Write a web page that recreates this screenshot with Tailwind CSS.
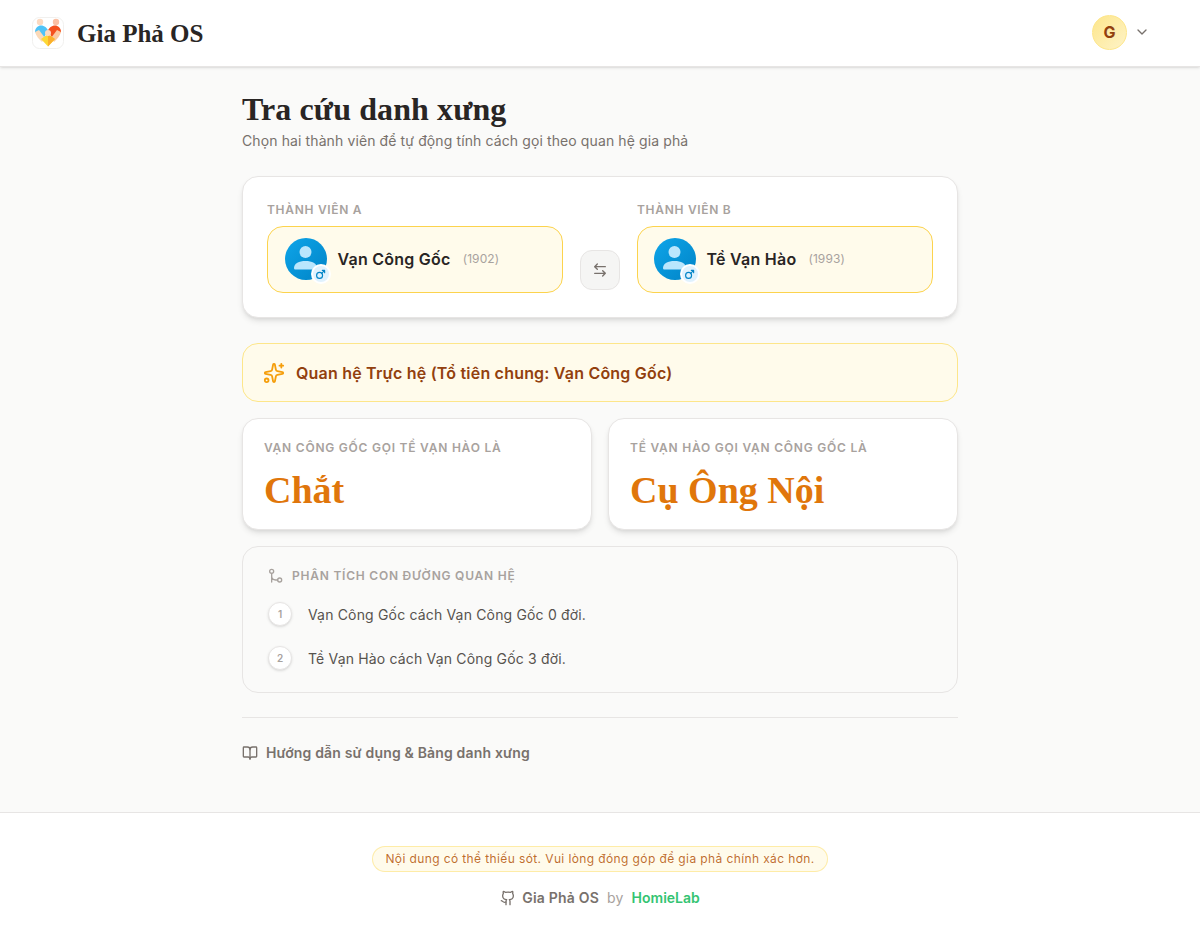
<!DOCTYPE html>
<html lang="en">
<head>
  <meta charset="UTF-8" />
  <title>Tra cứu danh xưng – Gia Phả OS</title>
  <script src="https://cdn.jsdelivr.net/npm/@tailwindcss/browser@4"></script>
</head>
<body class="bg-[#fafaf9] min-h-screen flex flex-col font-[Inter,sans-serif] text-[#292524]">

  <!-- Header -->
  <header class="h-[67px] bg-white border-b border-[#e7e5e4] shadow-sm flex items-center justify-between pl-8 pr-[50px]">
    <div class="flex items-center gap-[13px]">
      <svg class="w-8 h-8" viewBox="0 0 32 32">
        <rect x="0.5" y="0.5" width="31" height="31" rx="7" fill="#fff" stroke="#f1f0ee"/>
        <circle cx="8" cy="5" r="3.2" fill="#fcd9c0"/>
        <circle cx="24" cy="5" r="3.2" fill="#fbc0a4"/>
        <path d="M3 15c0-4 3-6.500 6-6.500 3.500 0 6 2.500 7 5l-4 7z" fill="#4fc3f7"/>
        <path d="M29 15c0-4-3-6.500-6-6.500-3.500 0-6 2.500-7 5l4 7z" fill="#f4511e"/>
        <path d="M3 15c1 4 4 7 7 10l3-4-6-8z" fill="#fbd9b8"/>
        <path d="M29 15c-1 4-4 7-7 10l-3-4 6-8z" fill="#fbc9a0"/>
        <path d="M9 22l7-5 7 5-7 7.500z" fill="#fdd835"/>
        <path d="M16 17l7 5-7 7.500z" fill="#fbb02d"/>
        <circle cx="16" cy="16" r="3" fill="#fcd9c0"/>
      </svg>
      <span class="font-['Liberation_Serif',serif] font-bold text-[25px] pt-[2px] text-[#292524]">Gia Phả OS</span>
    </div>
    <div class="flex items-center gap-[7px] mb-[2px]">
      <div class="w-[35px] h-[35px] rounded-full bg-gradient-to-br from-[#fde68a] to-[#fef3c7] border border-[#fde68a] flex items-center justify-center text-[#92400e] font-bold text-base">G</div>
      <svg class="w-4 h-4 text-[#78716c]" viewBox="0 0 24 24" fill="none" stroke="currentColor" stroke-width="2" stroke-linecap="round" stroke-linejoin="round"><path d="m6 9 6 6 6-6"/></svg>
    </div>
  </header>

  <!-- Main -->
  <main class="flex-1 w-[716px] mx-auto pt-[23px]">
    <h1 class="font-['Liberation_Serif',serif] font-bold text-[32px] leading-[38px] tracking-[0.1px] text-[#292524]">Tra cứu danh xưng</h1>
    <p class="text-sm leading-5 tracking-[0.11px] text-[#78716c] mt-[3px]">Chọn hai thành viên để tự động tính cách gọi theo quan hệ gia phả</p>

    <!-- Member picker -->
    <section class="mt-[25px] bg-white border border-[#e7e5e4] rounded-2xl shadow-md h-[142px] px-6 flex items-end gap-[17px] pb-[24px]">
      <div class="flex-1">
        <div class="text-xs leading-4 font-semibold tracking-[0.7px] text-[#a8a29e] mb-[8px]">THÀNH VIÊN A</div>
        <div class="h-[67px] rounded-2xl bg-[#fffbeb] border-[1.5px] border-[#fcd34d] flex items-center pl-[16.500px] gap-[11px]">
          <div class="relative w-[42px] h-[42px] mb-[1px] rounded-full bg-gradient-to-br from-[#0ea5e9] to-[#0284c7]">
            <svg class="w-[42px] h-[42px]" viewBox="0 0 42 42"><circle cx="20.500" cy="14" r="6" fill="#bae6fd"/><path d="M9 30c0-4.500 5-7 11.500-7S32 25.500 32 30c0 1-.7 1.500-1.500 1.500h-20C9.700 31.500 9 31 9 30z" fill="#bae6fd"/></svg>
            <div class="absolute right-[-4px] bottom-[-4px] w-5 h-5 rounded-full bg-[#e0f2fe] border-2 border-white flex items-center justify-center">
              <svg class="w-[11px] h-[11px] text-[#0284c7]" viewBox="0 0 24 24" fill="none" stroke="currentColor" stroke-width="2.500" stroke-linecap="round" stroke-linejoin="round"><circle cx="10" cy="14" r="6.500"/><path d="M14.500 9.500 21 3M16 3h5v5"/></svg>
            </div>
          </div>
          <span class="font-semibold text-base mb-[2px] tracking-[0.25px] text-[#292524]">Vạn Công Gốc</span>
          <span class="text-xs tracking-[0.1px] text-[#a8a29e] ml-[1px] mb-[1px]">(1902)</span>
        </div>
      </div>

      <button class="w-10 h-10 mb-[3px] rounded-xl bg-[#f5f5f4] border border-[#e7e5e4] flex items-center justify-center text-[#78716c] shrink-0">
        <svg class="w-4 h-4" viewBox="0 0 24 24" fill="none" stroke="currentColor" stroke-width="2" stroke-linecap="round" stroke-linejoin="round"><path d="M8 3 4 7l4 4M4 7h16M16 21l4-4-4-4M20 17H4"/></svg>
      </button>

      <div class="flex-1">
        <div class="text-xs leading-4 font-semibold tracking-[0.7px] text-[#a8a29e] mb-[8px]">THÀNH VIÊN B</div>
        <div class="h-[67px] rounded-2xl bg-[#fffbeb] border-[1.5px] border-[#fcd34d] flex items-center pl-[15.500px] gap-[11px]">
          <div class="relative w-[42px] h-[42px] mb-[1px] rounded-full bg-gradient-to-br from-[#0ea5e9] to-[#0284c7]">
            <svg class="w-[42px] h-[42px]" viewBox="0 0 42 42"><circle cx="20.500" cy="14" r="6" fill="#bae6fd"/><path d="M9 30c0-4.500 5-7 11.500-7S32 25.500 32 30c0 1-.7 1.500-1.500 1.500h-20C9.700 31.500 9 31 9 30z" fill="#bae6fd"/></svg>
            <div class="absolute right-[-4px] bottom-[-4px] w-5 h-5 rounded-full bg-[#e0f2fe] border-2 border-white flex items-center justify-center">
              <svg class="w-[11px] h-[11px] text-[#0284c7]" viewBox="0 0 24 24" fill="none" stroke="currentColor" stroke-width="2.500" stroke-linecap="round" stroke-linejoin="round"><circle cx="10" cy="14" r="6.500"/><path d="M14.500 9.500 21 3M16 3h5v5"/></svg>
            </div>
          </div>
          <span class="font-semibold text-base mb-[2px] tracking-[0.25px] text-[#292524]">Tề Vạn Hào</span>
          <span class="text-xs tracking-[0.1px] text-[#a8a29e] ml-[1px] mb-[1px]">(1993)</span>
        </div>
      </div>
    </section>

    <!-- Relation banner -->
    <div class="mt-[25px] h-[59px] rounded-2xl bg-[#fffbeb] border border-[#fde68a] flex items-center px-5 gap-[11px]">
      <svg class="w-[22px] h-[22px] text-[#f59e0b]" viewBox="0 0 24 24" fill="none" stroke="currentColor" stroke-width="2" stroke-linecap="round" stroke-linejoin="round"><path d="M11.017 2.814a1 1 0 0 1 1.966 0l1.051 5.558a2 2 0 0 0 1.594 1.594l5.558 1.051a1 1 0 0 1 0 1.966l-5.558 1.051a2 2 0 0 0-1.594 1.594l-1.051 5.558a1 1 0 0 1-1.966 0l-1.051-5.558a2 2 0 0 0-1.594-1.594l-5.558-1.051a1 1 0 0 1 0-1.966l5.558-1.051a2 2 0 0 0 1.594-1.594z"/><path d="M20 2v4M22 4h-4"/><circle cx="4" cy="20" r="2"/></svg>
      <span class="font-semibold text-base tracking-[0.2px] text-[#92400e]">Quan hệ Trực hệ (Tổ tiên chung: Vạn Công Gốc)</span>
    </div>

    <!-- Results -->
    <div class="grid grid-cols-2 gap-4 mt-4">
      <div class="h-[112px] bg-white border border-[#e7e5e4] rounded-2xl shadow-md px-[21px] pt-[21px]">
        <div class="text-xs leading-4 font-semibold tracking-[0.77px] text-[#a8a29e]">VẠN CÔNG GỐC GỌI TỀ VẠN HÀO LÀ</div>
        <div class="font-['Liberation_Serif',serif] font-bold text-[38px] leading-[48px] mt-[10px] text-[#e0760b]">Chắt</div>
      </div>
      <div class="h-[112px] bg-white border border-[#e7e5e4] rounded-2xl shadow-md px-[21px] pt-[21px]">
        <div class="text-xs leading-4 font-semibold tracking-[0.77px] text-[#a8a29e]">TỀ VẠN HÀO GỌI VẠN CÔNG GỐC LÀ</div>
        <div class="font-['Liberation_Serif',serif] font-bold text-[38px] leading-[48px] mt-[10px] text-[#e0760b]">Cụ Ông Nội</div>
      </div>
    </div>

    <!-- Path analysis -->
    <section class="mt-4 h-[147px] rounded-2xl border border-[#e7e5e4] bg-[#fafaf9] px-[25px] pt-[21px]">
      <div class="flex items-center gap-2">
        <svg class="w-4 h-4 text-[#a8a29e]" viewBox="0 0 24 24" fill="none" stroke="currentColor" stroke-width="2" stroke-linecap="round" stroke-linejoin="round"><circle cx="5.500" cy="5" r="3"/><circle cx="17.500" cy="18" r="3"/><path d="M5.500 8v13M5.500 12c0 4 3 6 6 6h3"/></svg>
        <span class="text-xs leading-4 font-semibold tracking-[0.77px] text-[#a8a29e]">PHÂN TÍCH CON ĐƯỜNG QUAN HỆ</span>
      </div>
      <ol class="mt-[18px] flex flex-col gap-5">
        <li class="flex items-center gap-4 h-6">
          <span class="w-6 h-6 rounded-full bg-white border border-[#e7e5e4] shadow-sm flex items-center justify-center text-[10px] font-semibold text-[#a8a29e]">1</span>
          <span class="text-sm pt-[2px] tracking-[0.17px] text-[#57534e]">Vạn Công Gốc cách Vạn Công Gốc 0 đời.</span>
        </li>
        <li class="flex items-center gap-4 h-6">
          <span class="w-6 h-6 rounded-full bg-white border border-[#e7e5e4] shadow-sm flex items-center justify-center text-[10px] font-semibold text-[#a8a29e]">2</span>
          <span class="text-sm pt-[2px] tracking-[0.17px] text-[#57534e]">Tề Vạn Hào cách Vạn Công Gốc 3 đời.</span>
        </li>
      </ol>
    </section>

    <!-- Guide -->
    <div class="mt-6 border-t border-[#e7e5e4] pt-[25px] flex items-center gap-2 text-[#78716c]">
      <svg class="w-4 h-4" viewBox="0 0 24 24" fill="none" stroke="currentColor" stroke-width="2" stroke-linecap="round" stroke-linejoin="round"><path d="M12 7v14"/><path d="M3 18a1 1 0 0 1-1-1V4a1 1 0 0 1 1-1h5a4 4 0 0 1 4 4 4 4 0 0 1 4-4h5a1 1 0 0 1 1 1v13a1 1 0 0 1-1 1h-6a3 3 0 0 0-3 3 3 3 0 0 0-3-3z"/></svg>
      <span class="text-sm font-semibold tracking-[0.17px]">Hướng dẫn sử dụng &amp; Bảng danh xưng</span>
    </div>
  </main>

  <!-- Footer -->
  <footer class="h-[129px] bg-white border-t border-[#e7e5e4] flex flex-col items-center pt-[33px]">
    <div class="h-[26px] px-3 rounded-full bg-[#fffbeb] border border-[#fde68a]/70 flex items-center text-xs tracking-[0.39px] text-[#b45309]/85">Nội dung có thể thiếu sót. Vui lòng đóng góp để gia phả chính xác hơn.</div>
    <div class="flex items-center gap-2 mt-[16px] text-sm">
      <svg class="w-4 h-4 mr-[-2px] text-[#78716c]" viewBox="0 0 24 24" fill="none" stroke="currentColor" stroke-width="2" stroke-linecap="round" stroke-linejoin="round"><path d="M15 22v-4a4.800 4.800 0 0 0-1-3.500c3 0 6-2 6-5.500.08-1.250-.27-2.480-1-3.500.28-1.150.28-2.350 0-3.500 0 0-1 0-3 1.500-2.640-.5-5.360-.5-8 0C6 2 5 2 5 2c-.3 1.150-.3 2.350 0 3.500A5.400 5.400 0 0 0 4 9c0 3.500 3 5.500 6 5.500-.39.490-.68 1.050-.85 1.650-.17.600-.22 1.230-.15 1.850v4"/><path d="M9 18c-4.510 2-5-2-7-2"/></svg>
      <span class="font-semibold tracking-[0.2px] text-[#78716c]">Gia Phả OS</span>
      <span class="tracking-[0.2px] text-[#a8a29e]">by</span>
      <span class="font-semibold text-[#34c472]">HomieLab</span>
    </div>
  </footer>

</body>
</html>
